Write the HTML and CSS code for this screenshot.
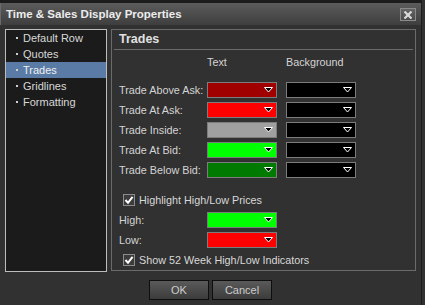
FILE: index.html
```html
<!DOCTYPE html>
<html>
<head>
<meta charset="utf-8">
<link rel="stylesheet" href="styles.css">
</head>
<body>
<div class="dialog">
  <div class="topband"></div>
  <div class="titlebar">
    <span class="title">Time &amp; Sales Display Properties</span>
    <span class="close"><svg width="10" height="8" viewBox="0 0 10 8"><path d="M1.5 0.5 L8.5 7.5 M8.5 0.5 L1.5 7.5" stroke="#d8d8d8" stroke-width="2.2" fill="none"/></svg></span>
  </div>
  <div class="main">
    <ul class="nav">
      <li>Default Row</li>
      <li>Quotes</li>
      <li class="sel">Trades</li>
      <li>Gridlines</li>
      <li>Formatting</li>
    </ul>
    <section class="group">
      <h2 class="heading">Trades</h2>
      <div class="sep"></div>
      <div class="colheads"><span></span><span>Text</span><span>Background</span></div>
      <div class="rows">
        <span class="label">Trade Above Ask:</span>
        <span class="swatch c-darkred"><svg class="arr" width="9" height="6" viewBox="0 0 9 6"><polygon points="0.5,0.5 8.5,0.5 4.5,5" fill="#000" stroke="#fff" stroke-width="1"/></svg></span>
        <span class="swatch c-black"><svg class="arr" width="9" height="6" viewBox="0 0 9 6"><polygon points="0.5,0.5 8.5,0.5 4.5,5" fill="#000" stroke="#fff" stroke-width="1"/></svg></span>
        <span class="label">Trade At Ask:</span>
        <span class="swatch c-red"><svg class="arr" width="9" height="6" viewBox="0 0 9 6"><polygon points="0.5,0.5 8.5,0.5 4.5,5" fill="#000" stroke="#fff" stroke-width="1"/></svg></span>
        <span class="swatch c-black"><svg class="arr" width="9" height="6" viewBox="0 0 9 6"><polygon points="0.5,0.5 8.5,0.5 4.5,5" fill="#000" stroke="#fff" stroke-width="1"/></svg></span>
        <span class="label">Trade Inside:</span>
        <span class="swatch c-gray"><svg class="arr" width="9" height="6" viewBox="0 0 9 6"><polygon points="0.5,0.5 8.5,0.5 4.5,5" fill="#000" stroke="#fff" stroke-width="1"/></svg></span>
        <span class="swatch c-black"><svg class="arr" width="9" height="6" viewBox="0 0 9 6"><polygon points="0.5,0.5 8.5,0.5 4.5,5" fill="#000" stroke="#fff" stroke-width="1"/></svg></span>
        <span class="label">Trade At Bid:</span>
        <span class="swatch c-green"><svg class="arr" width="9" height="6" viewBox="0 0 9 6"><polygon points="0.5,0.5 8.5,0.5 4.5,5" fill="#000" stroke="#fff" stroke-width="1"/></svg></span>
        <span class="swatch c-black"><svg class="arr" width="9" height="6" viewBox="0 0 9 6"><polygon points="0.5,0.5 8.5,0.5 4.5,5" fill="#000" stroke="#fff" stroke-width="1"/></svg></span>
        <span class="label">Trade Below Bid:</span>
        <span class="swatch c-darkgreen"><svg class="arr" width="9" height="6" viewBox="0 0 9 6"><polygon points="0.5,0.5 8.5,0.5 4.5,5" fill="#000" stroke="#fff" stroke-width="1"/></svg></span>
        <span class="swatch c-black"><svg class="arr" width="9" height="6" viewBox="0 0 9 6"><polygon points="0.5,0.5 8.5,0.5 4.5,5" fill="#000" stroke="#fff" stroke-width="1"/></svg></span>
      </div>
      <div class="extra">
        <div class="check"><span class="box"><svg width="10" height="10" viewBox="0 0 10 10"><path d="M1.5 5 L4 7.8 L8.6 1.8" stroke="#fff" stroke-width="2" fill="none"/></svg></span><span>Highlight High/Low Prices</span></div>
        <div class="pair">
          <span class="label">High:</span>
          <span class="swatch c-green"><svg class="arr" width="9" height="6" viewBox="0 0 9 6"><polygon points="0.5,0.5 8.5,0.5 4.5,5" fill="#000" stroke="#fff" stroke-width="1"/></svg></span>
        </div>
        <div class="pair">
          <span class="label">Low:</span>
          <span class="swatch c-red"><svg class="arr" width="9" height="6" viewBox="0 0 9 6"><polygon points="0.5,0.5 8.5,0.5 4.5,5" fill="#000" stroke="#fff" stroke-width="1"/></svg></span>
        </div>
        <div class="check"><span class="box"><svg width="10" height="10" viewBox="0 0 10 10"><path d="M1.5 5 L4 7.8 L8.6 1.8" stroke="#fff" stroke-width="2" fill="none"/></svg></span><span>Show 52 Week High/Low Indicators</span></div>
      </div>
    </section>
  </div>
  <div class="buttons">
    <button class="btn">OK</button>
    <button class="btn">Cancel</button>
  </div>
</div>
</body>
</html>
```
FILE: styles.css
```css
html, body {
  margin: 0;
  padding: 0;
}
body {
  background: #313131;
  width: 425px;
  height: 305px;
  overflow: hidden;
  font-family: "Liberation Sans", Arial, sans-serif;
  font-size: 10.8px;
  color: #d4d4d4;
}
.dialog {
  width: 421px;
  height: 305px;
  border-right: 1px solid #1c1c1c;
  background: #313131;
}
.topband {
  height: 3px;
  background: #1c1c1c;
}
.titlebar {
  height: 22px;
  display: flex;
  align-items: center;
  justify-content: space-between;
  padding: 0 5px 0 6px;
  background: linear-gradient(#5c5c5c, #3e3e3e);
  border-left: 1px solid #6a6a6a;
  box-sizing: border-box;
}
.title {
  font-weight: bold;
  font-size: 11.5px;
  color: #ececec;
  margin-left: -1px;
}
.close {
  width: 16px;
  height: 13px;
  box-sizing: border-box;
  border: 1px solid #8a8a8a;
  background: linear-gradient(#646464, #4a4a4a);
  display: flex;
  align-items: center;
  justify-content: center;
  margin-top: 1px;
}
.main {
  display: flex;
  gap: 4px;
  padding: 4px 0 0 5px;
}
.nav {
  list-style: none;
  margin: 0;
  padding: 0;
  width: 102px;
  height: 243px;
  box-sizing: border-box;
  border: 1px solid #bdbdbd;
  background: #1b1b1b;
  font-size: 11px;
}
.nav li {
  height: 16px;
  line-height: 16px;
  padding-left: 10px;
  display: flex;
  align-items: center;
  color: #d8d8d8;
}
.nav li::before {
  content: "";
  width: 2px;
  height: 2px;
  background: #d0d0d0;
  margin-right: 5px;
}
.nav li.sel {
  background: #5a7ba5;
  color: #f0f0f0;
}
.group {
  width: 305px;
  height: 242px;
  box-sizing: border-box;
  border: 1px solid #6b6b6b;
}
.heading {
  margin: 0;
  height: 19px;
  line-height: 19px;
  padding-left: 7px;
  font-size: 12.5px;
  font-weight: bold;
  color: #e0e0e0;
}
.sep {
  height: 1px;
  margin: 0 2px;
  background: #6b6b6b;
}
.colheads {
  display: grid;
  grid-template-columns: 88px 79px 70px;
  padding-left: 7px;
  margin-top: 5px;
  height: 14px;
  line-height: 14px;
  margin-bottom: 13px;
}
.rows {
  display: grid;
  grid-template-columns: 88px 79px 70px;
  row-gap: 4px;
  padding-left: 7px;
}
.label {
  height: 16px;
  line-height: 16px;
  color: #d4d4d4;
  white-space: nowrap;
}
.swatch {
  width: 70px;
  height: 16px;
  box-sizing: border-box;
  border: 1px solid #7c7c7c;
  display: flex;
  align-items: center;
  justify-content: flex-end;
  padding-right: 3px;
}
.arr {
  display: block;
  margin-top: -1px;
}
.c-darkred { background: #a00000; }
.c-red { background: #ff0000; }
.c-gray { background: #a0a0a0; }
.c-green { background: #00ff00; }
.c-darkgreen { background: #007a00; }
.c-black { background: #000000; }
.extra {
  margin-top: 14px;
  padding-left: 7px;
  display: flex;
  flex-direction: column;
  gap: 4px;
}
.check {
  height: 16px;
  display: flex;
  align-items: center;
  gap: 4px;
  padding-left: 4px;
  color: #d8d8d8;
}
.box {
  width: 12px;
  height: 12px;
  box-sizing: border-box;
  border: 1px solid #8c8c8c;
  background: #3c3c3c;
  display: flex;
  align-items: center;
  justify-content: center;
}
.box svg {
  display: block;
}
.pair {
  display: grid;
  grid-template-columns: 88px 70px;
}
.buttons {
  display: flex;
  justify-content: center;
  gap: 3px;
  margin-top: 8px;
}
.btn {
  width: 60px;
  height: 20px;
  box-sizing: border-box;
  border: 1px solid #0e0e0e;
  background: linear-gradient(#5a5a5a, #3c3c3c);
  color: #cccccc;
  font-family: "Liberation Sans", Arial, sans-serif;
  font-size: 11px;
  padding: 0;
}
```
